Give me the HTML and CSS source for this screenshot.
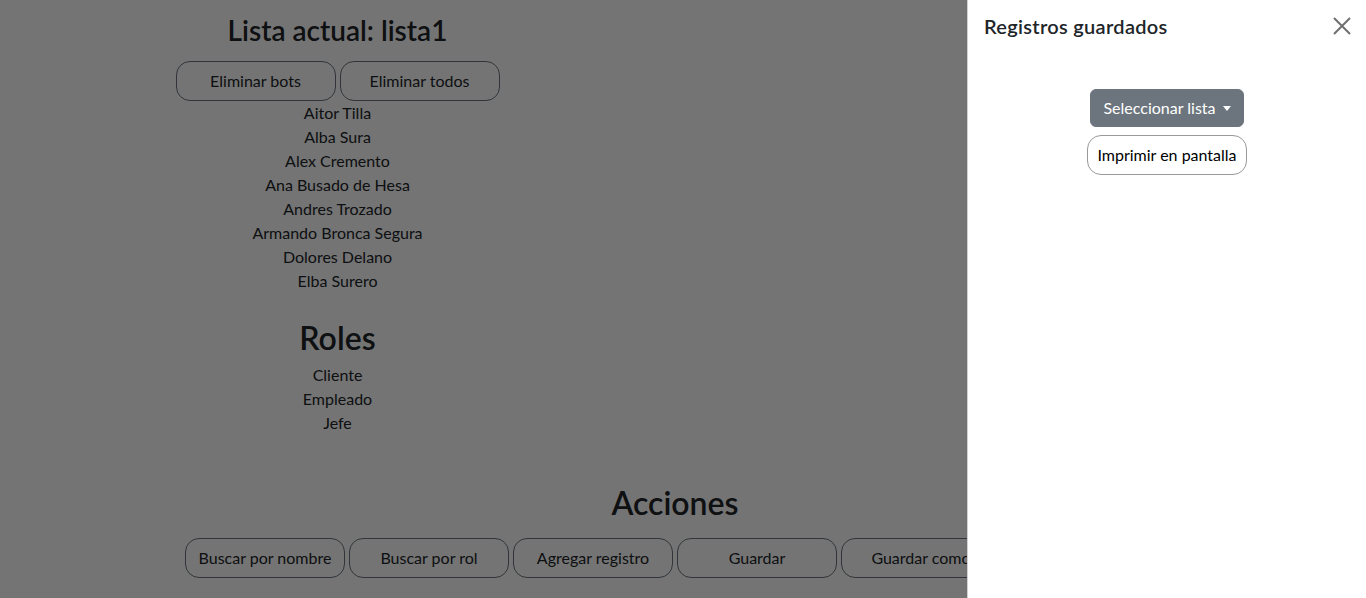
FILE: index.html
```html
<!DOCTYPE html>
<html lang="es">
<head>
<meta charset="utf-8">
<title>Registros</title>
<link rel="stylesheet" href="styles.css">
</head>
<body>
<main class="page">
  <div class="row">
    <section class="col">
      <h3 class="title first">Lista actual: lista1</h3>
      <div class="btn-row">
        <button class="btn-out">Eliminar bots</button>
        <button class="btn-out">Eliminar todos</button>
      </div>
      <ul class="list">
        <li>Aitor Tilla</li>
        <li>Alba Sura</li>
        <li>Alex Cremento</li>
        <li>Ana Busado de Hesa</li>
        <li>Andres Trozado</li>
        <li>Armando Bronca Segura</li>
        <li>Dolores Delano</li>
        <li>Elba Surero</li>
      </ul>
      <h2 class="title roles">Roles</h2>
      <ul class="list roles-list">
        <li>Cliente</li>
        <li>Empleado</li>
        <li>Jefe</li>
      </ul>
    </section>
    <section class="col"></section>
  </div>
  <section class="actions">
    <h2 class="title">Acciones</h2>
    <div class="btn-row actions-row">
      <button class="btn-out">Buscar por nombre</button>
      <button class="btn-out">Buscar por rol</button>
      <button class="btn-out">Agregar registro</button>
      <button class="btn-out">Guardar</button>
      <button class="btn-out">Guardar como</button>
      <button class="btn-out">Cargar</button>
    </div>
  </section>
</main>
<div class="backdrop"></div>
<aside class="offcanvas">
  <header class="oc-header">
    <h5 class="oc-title">Registros guardados</h5>
    <button class="btn-close" aria-label="Cerrar">
      <svg width="18" height="18" viewBox="0 0 18 18"><path d="M1 1 L17 17 M17 1 L1 17" stroke="#6f6f6f" stroke-width="2" fill="none"/></svg>
    </button>
  </header>
  <div class="oc-body">
    <button class="btn-sec">Seleccionar lista<span class="caret"></span></button>
    <button class="btn-out btn-print">Imprimir en pantalla</button>
  </div>
</aside>
</body>
</html>
```

FILE: styles.css
```css
* { box-sizing: border-box; }
html, body { margin: 0; height: 100%; }
body {
  font-family: "Lato", "Noto Sans", sans-serif;
  font-size: 16px;
  line-height: 24px;
  color: #212529;
  background: #fff;
  padding-right: 16px;
  overflow: hidden;
}
.page { width: 1350px; }
.row { display: flex; }
.col { flex: 0 0 50%; text-align: center; }
.title {
  font-size: 32px;
  font-weight: 600;
  line-height: 38px;
  margin: 0;
  text-align: center;
}
.title.first {
  font-size: 28px;
  line-height: 34px;
  margin-top: 13px;
}
.btn-row {
  display: flex;
  justify-content: center;
  gap: 4px;
  margin-top: 14px;
}
.btn-out {
  width: 160px;
  height: 40px;
  background: transparent;
  border: 1px solid #6c757d;
  border-radius: 14px;
  font: inherit;
  color: #212529;
  padding: 0 6px;
  white-space: nowrap;
  overflow: hidden;
  cursor: pointer;
}
.list { list-style: none; margin: 0; padding: 0; }
.title.roles { margin-top: 26px; }
.roles-list { margin-top: 6px; }
.actions { margin-top: 49px; }
.actions-row { margin-top: 16px; }

.backdrop {
  position: fixed;
  inset: 0;
  background: rgba(0, 0, 0, 0.545);
}
.offcanvas {
  position: fixed;
  top: 0;
  right: 0;
  bottom: 0;
  width: 399px;
  background: #fff;
  border-left: 1px solid rgba(0, 0, 0, 0.18);
  display: flex;
  flex-direction: column;
}
.oc-header {
  display: flex;
  align-items: center;
  justify-content: space-between;
  padding: 11px 12px 0 16px;
}
.oc-title {
  margin: 0;
  font-size: 20px;
  font-weight: 600;
  line-height: 30px;
  letter-spacing: 0.3px;
}
.btn-close {
  width: 24px;
  height: 24px;
  padding: 0;
  border: 0;
  background: transparent;
  display: flex;
  align-items: center;
  justify-content: center;
}
.oc-body {
  display: flex;
  flex-direction: column;
  align-items: center;
  padding-top: 48px;
}
.btn-sec {
  height: 38px;
  padding: 0 12px;
  background: #6c757d;
  color: #fff;
  border: 1px solid #6c757d;
  border-radius: 6px;
  font: inherit;
  display: flex;
  align-items: center;
}
.caret {
  display: inline-block;
  margin-left: 7px;
  border-top: 5px solid #fff;
  border-left: 4.5px solid transparent;
  border-right: 4.5px solid transparent;
}
.btn-print {
  margin-top: 8px;
  border-color: #999;
  color: #000;
}
```
